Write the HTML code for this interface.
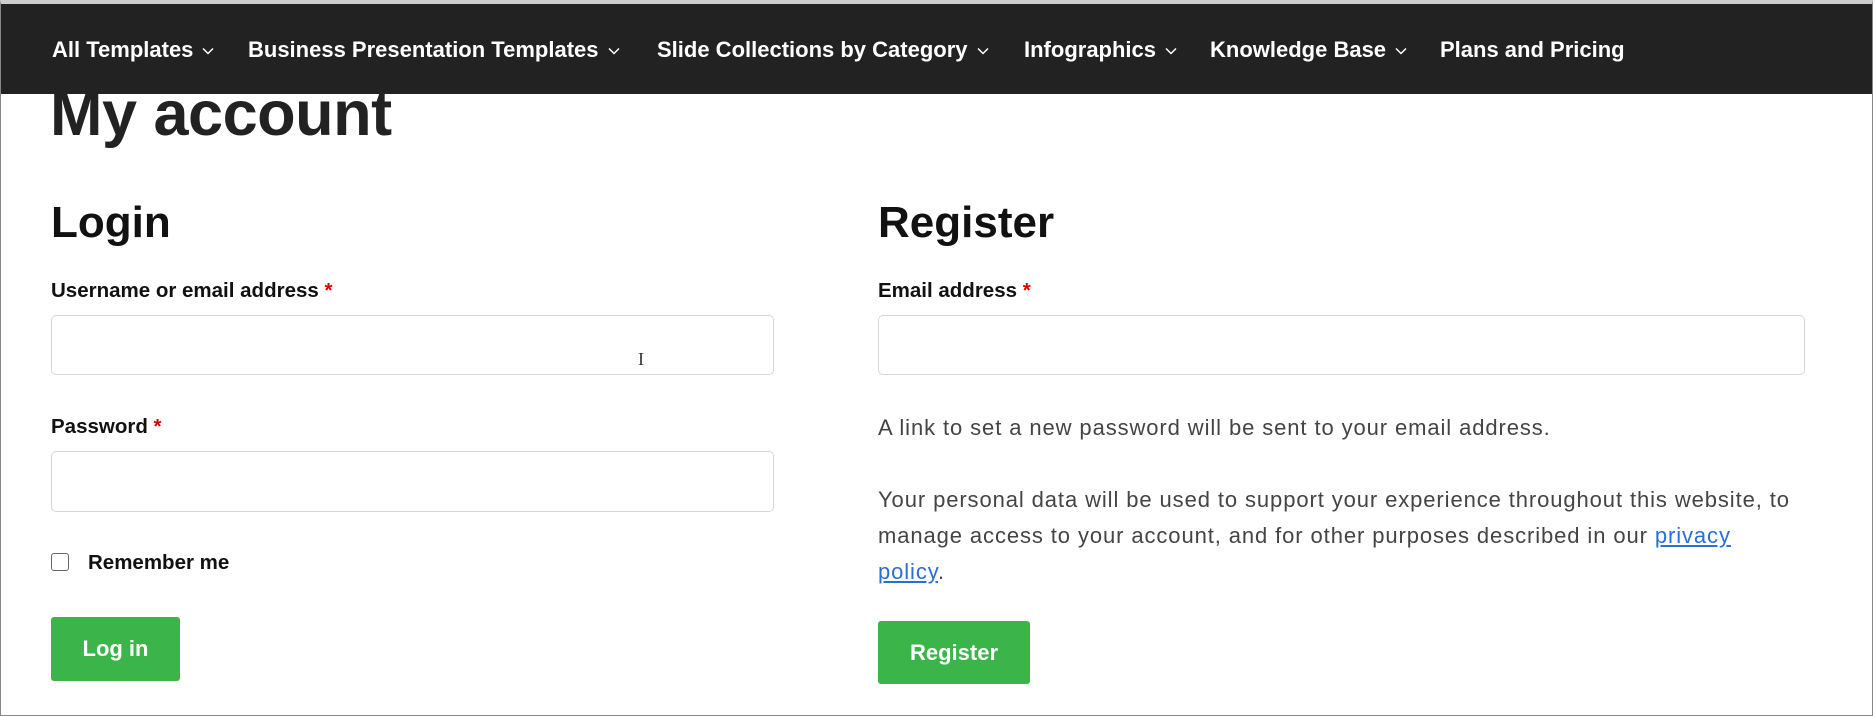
<!DOCTYPE html>
<html><head><meta charset="utf-8"><style>
*{margin:0;padding:0;box-sizing:border-box}
html,body{width:1875px;height:716px;overflow:hidden;background:#fff;font-family:"Liberation Sans",Arial,sans-serif;color:#1a1a1a}
.frame{position:absolute;left:0;top:0;width:1873px;height:716px;border:1px solid #888;border-top:4px solid #ccc}
.nav{position:absolute;left:1px;top:4px;width:1871px;height:90px;background:#222;z-index:2}
.nav span{position:absolute;top:33px;color:#fff;font-weight:bold;font-size:22px;white-space:nowrap}
.nav svg{margin-left:9px;vertical-align:middle}
.a{position:absolute;white-space:nowrap}
h1{position:absolute;left:50px;top:78px;font-size:63px;font-weight:bold;color:#222;letter-spacing:-0.5px;z-index:1}
h2{position:absolute;font-size:44px;font-weight:bold;color:#111}
.lbl{position:absolute;font-size:20.5px;font-weight:bold;color:#111}
.lbl b{color:#d00}
.inp{position:absolute;border:1px solid #d6d6de;border-radius:5px;background:#fff}
.btn{position:absolute;background:#3bb54a;color:#fff;font-weight:bold;font-size:22px;border-radius:3px;text-align:center}
.p{position:absolute;font-size:22px;color:#444;line-height:36px;letter-spacing:0.9px;white-space:nowrap}
.p a{color:#2a6fd6;text-decoration:underline}
</style></head><body>
<div class="frame"></div>
<div class="nav">
<span style="left:51px">All Templates<svg width="12" height="8" viewBox="0 0 12 8"><path d="M1 1.5l5 5 5-5" fill="none" stroke="#fff" stroke-width="1.5"/></svg></span>
<span style="left:247px">Business Presentation Templates<svg width="12" height="8" viewBox="0 0 12 8"><path d="M1 1.5l5 5 5-5" fill="none" stroke="#fff" stroke-width="1.5"/></svg></span>
<span style="left:656px">Slide Collections by Category<svg width="12" height="8" viewBox="0 0 12 8"><path d="M1 1.5l5 5 5-5" fill="none" stroke="#fff" stroke-width="1.5"/></svg></span>
<span style="left:1023px">Infographics<svg width="12" height="8" viewBox="0 0 12 8"><path d="M1 1.5l5 5 5-5" fill="none" stroke="#fff" stroke-width="1.5"/></svg></span>
<span style="left:1209px">Knowledge Base<svg width="12" height="8" viewBox="0 0 12 8"><path d="M1 1.5l5 5 5-5" fill="none" stroke="#fff" stroke-width="1.5"/></svg></span>
<span style="left:1439px">Plans and Pricing</span>
</div>
<h1>My account</h1>
<h2 style="left:51px;top:198px">Login</h2>
<h2 style="left:878px;top:198px">Register</h2>
<div class="lbl" style="left:51px;top:279px">Username or email address <b>*</b></div>
<div class="inp" style="left:51px;top:315px;width:723px;height:60px"></div>
<div class="lbl" style="left:51px;top:415px">Password <b>*</b></div>
<div class="inp" style="left:51px;top:451px;width:723px;height:61px"></div>
<div class="a" style="left:51px;top:553px;width:18px;height:18px;border:1.5px solid #666;border-radius:3px"></div>
<div class="lbl" style="left:88px;top:551px">Remember me</div>
<div class="btn" style="left:51px;top:617px;width:129px;height:64px;line-height:64px">Log in</div>
<div class="a" style="left:638px;top:349px;font-size:18px;color:#333;font-family:'Liberation Serif',serif">I</div>
<div class="lbl" style="left:878px;top:279px">Email address <b>*</b></div>
<div class="inp" style="left:878px;top:315px;width:927px;height:60px"></div>
<div class="p" style="left:878px;top:410px">A link to set a new password will be sent to your email address.</div>
<div class="p" style="left:878px;top:482px">Your personal data will be used to support your experience throughout this website, to<br>manage access to your account, and for other purposes described in our <a>privacy</a><br><a>policy</a>.</div>
<div class="btn" style="left:878px;top:621px;width:152px;height:63px;line-height:63px">Register</div>
</body></html>
